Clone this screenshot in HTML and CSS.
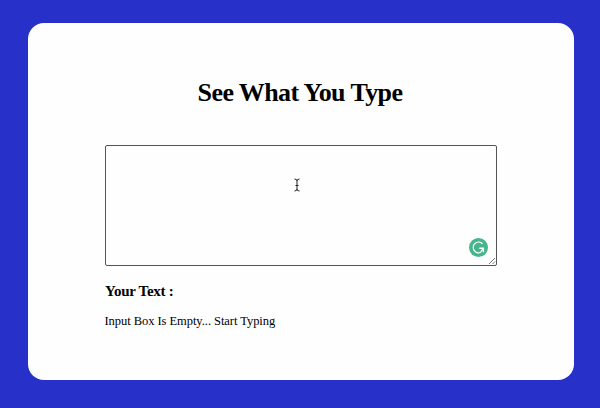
FILE: index.html
```html
<!DOCTYPE html>
<html lang="en">
<head>
<meta charset="utf-8">
<title>See What You Type</title>
<link rel="stylesheet" href="styles.css">
</head>
<body>
<main class="card">
  <h1 class="title">See What You Type</h1>
  <div class="field">
    <textarea class="input" aria-label="Your text"></textarea>
    <svg class="cursor" viewBox="0 0 8 14"><path d="M1.5 1Q4 1 4 3Q4 1 6.5 1M4 3V11M1.5 13Q4 13 4 11Q4 13 6.5 13M2.5 7.5H5.5"/></svg>
    <svg class="badge" viewBox="0 0 20 20"><circle cx="10" cy="10" r="10"/><path d="M14.2 6.2A5.6 5.6 0 1 0 12.5 15M10.8 10.8H15.2V15M15.2 10.8L12.5 14.5"/></svg>
    <svg class="grip" viewBox="0 0 8 8"><path d="M1 7L7 1M4.5 7L7 4.5"/></svg>
  </div>
  <h2 class="label">Your Text :</h2>
  <p class="output">Input Box Is Empty... Start Typing</p>
</main>
</body>
</html>
```

FILE: styles.css
```css
* { box-sizing: border-box; }
body {
  margin: 0;
  height: 408px;
  padding: 22.5px 26px 28px 28px;
  background: #2730c8;
  font-family: "Liberation Serif", serif;
  color: #000;
  overflow: hidden;
}
.card {
  height: 357px;
  padding: 55.5px 77px 0;
  border-radius: 16px;
  background: #fefefe;
}
.title {
  margin: 0 0 37px;
  padding-right: 2px;
  font-size: 26px;
  line-height: 30px;
  letter-spacing: -0.6px;
  text-align: center;
  white-space: nowrap;
}
.field { position: relative; height: 121px; }
.input {
  display: block;
  width: 392px;
  height: 121px;
  border: 1px solid #555;
  border-radius: 2px;
  background: #fefefe;
  resize: none;
  outline: none;
}
.cursor, .badge, .grip { position: absolute; fill: none; }
.cursor { left: 188px; top: 33px; width: 8px; height: 14px; stroke: #222; }
.badge { left: 364px; top: 93px; width: 19px; height: 19px; }
.badge circle { fill: #46b58d; }
.badge path { stroke: #fff; stroke-width: 1.4; }
.grip { left: 383px; top: 112px; width: 8px; height: 8px; stroke: #777; }
.label {
  margin: 16px 0 0;
  font-size: 15px;
  line-height: 18px;
  letter-spacing: -0.27px;
}
.output {
  margin: 13px 0 0 -0.5px;
  font-size: 12.5px;
  line-height: 16px;
  letter-spacing: -0.05px;
  white-space: nowrap;
}
```
